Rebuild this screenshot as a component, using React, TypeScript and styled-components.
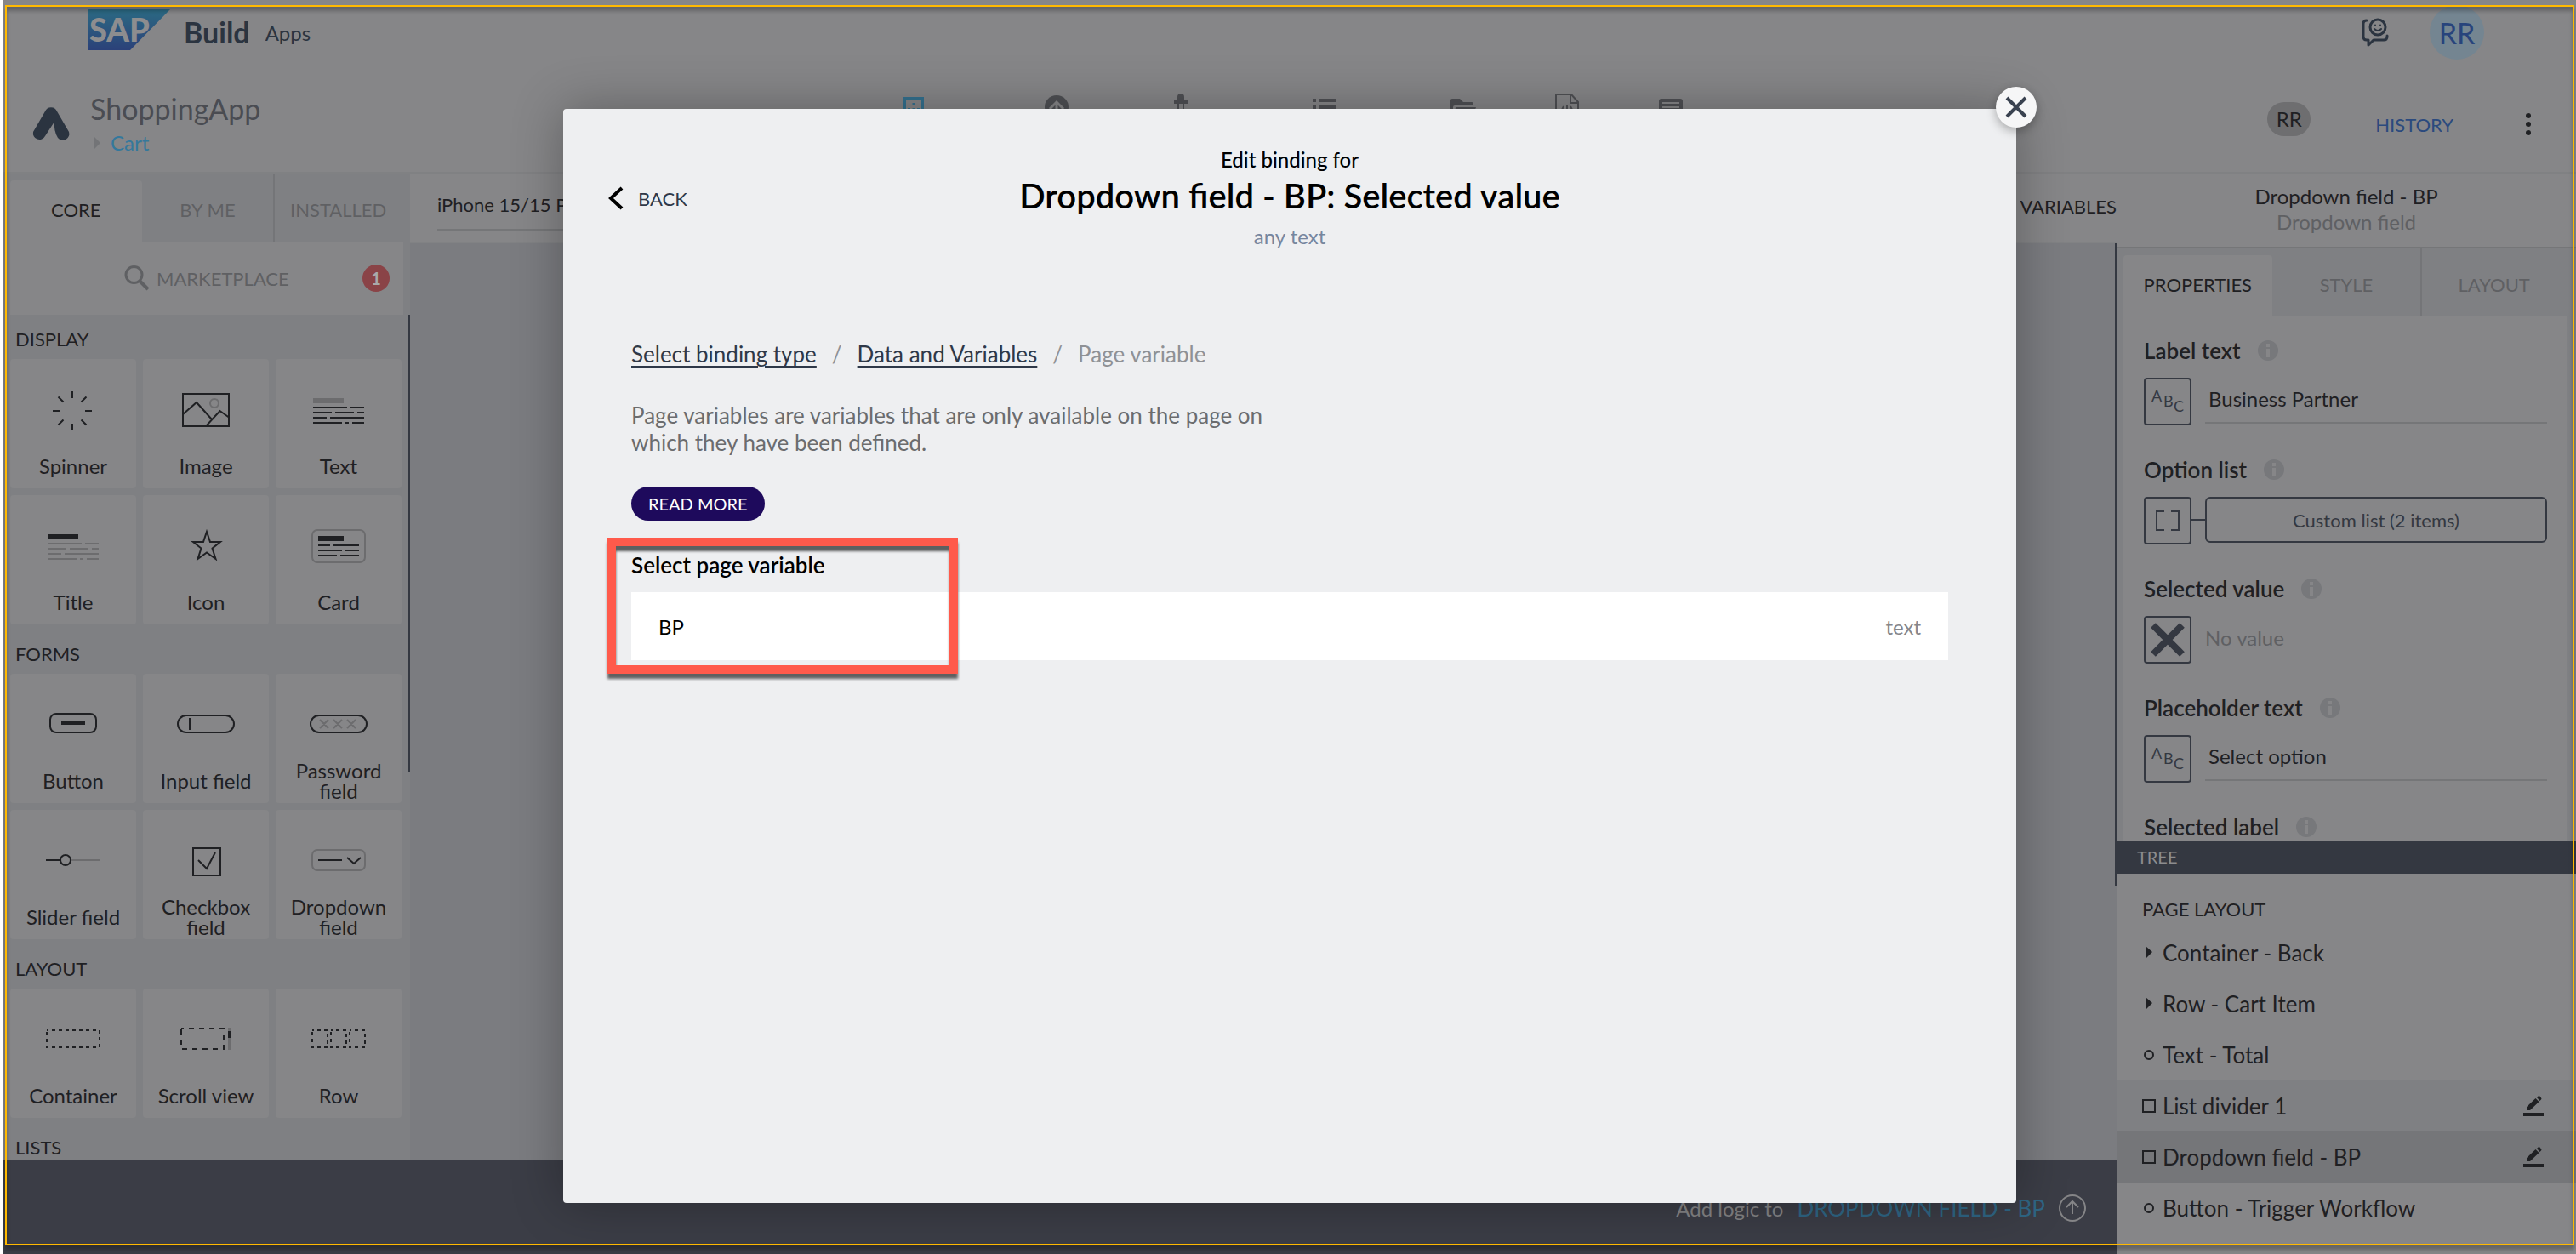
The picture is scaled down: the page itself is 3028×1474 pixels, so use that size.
import React from "react";
import styled, { createGlobalStyle } from "styled-components";

const c = {
  surface: "#868688",
  panel: "#7f8083",
  canvas: "#7b7c80",
  ink: "#1f2023",
  slate: "#343841",
  muted: "#5f6063",
  faint: "#6c6c6e",
  line: "#757678",
  bar: "#3b3d46",
  blue: "#34789c",
};

const Global = createGlobalStyle`
  *, *::before, *::after { box-sizing: border-box; }
  body { margin: 0; background: #fff; font-family: Lato, "Open Sans", sans-serif; font-size: 24px; color: ${c.ink}; }
  button, input, select { font: inherit; color: inherit; background: none; border: 0; padding: 0; margin: 0; border-radius: 0; text-align: inherit; }
  h1, h2, h3, p, ul { margin: 0; padding: 0; font-size: inherit; font-weight: 400; list-style: none; }
  svg { display: block; overflow: visible; flex: none; }
`;

const Page = styled.div`
  position: relative;
  margin-left: 4px;
  height: 100vh;
  display: flex;
  flex-direction: column;
  background: ${c.surface};
  overflow: hidden;
`;

const ShellBar = styled.header`
  display: flex;
  align-items: center;
  height: 76px;
  padding: 0 108px 0 100px;
`;
const Product = styled.strong`
  margin-left: 16px;
  font-size: 34px;
  font-weight: 700;
  line-height: 40px;
  color: #2b3440;
`;
const ProductArea = styled.span`
  margin-left: 18px;
  flex: 1;
  color: #2b3440;
`;
const Avatar = styled.button`
  width: 64px;
  height: 64px;
  margin-left: 48px;
  border-radius: 50%;
  background: #748591;
  color: #28447c;
  font-size: 34px;
  text-align: center;
`;

const AppBar = styled.header`
  display: grid;
  grid-template-columns: 1fr auto 1fr;
  height: 128px;
  padding-left: 6px;
  border-bottom: 2px solid #808183;
`;
const AppIdentity = styled.div`
  display: flex;
  align-items: flex-start;
  gap: 24px;
  padding: 32px 0 0 28px;
  > svg { margin-top: 16px; }
`;
const AppName = styled.h1`
  font-size: 34px;
  line-height: 40px;
  color: #4a4c52;
`;
const Crumb = styled.a`
  display: flex;
  align-items: center;
  gap: 12px;
  margin-top: 4px;
  padding-left: 4px;
  line-height: 32px;
  color: ${c.blue};
  text-decoration: none;
`;
const ToolNav = styled.nav`
  display: flex;
  align-items: flex-start;
  padding-top: 32px;
  color: #4f5054;
`;
const Tool = styled.button<{ $gap?: number; $active?: boolean }>`
  margin-left: ${(p) => p.$gap ?? 0}px;
  color: ${(p) => (p.$active ? "#34718f" : "inherit")};
`;
const AppActions = styled.div`
  display: flex;
  justify-content: flex-end;
  align-items: flex-start;
  gap: 76px;
  padding: 44px 44px 0 0;
`;
const UserPill = styled.span`
  width: 51px;
  height: 40px;
  line-height: 40px;
  border-radius: 20px;
  text-align: center;
  background: #6e6e70;
`;
const HistoryButton = styled.button`
  height: 52px;
  font-size: 22px;
  color: #2b4a7e;
`;
const MoreButton = styled.button`
  height: 52px;
`;

const Workspace = styled.div`
  flex: 1;
  min-height: 0;
  display: flex;
`;
const Stage = styled.div`
  flex: 1;
  min-width: 0;
  display: flex;
  flex-direction: column;
`;
const StageUpper = styled.div`
  flex: 1;
  min-height: 0;
  display: flex;
`;

const Palette = styled.aside`
  width: 478px;
  display: flex;
  flex-direction: column;
  background: ${c.panel};
`;
const Tabs = styled.div<{ $right: number }>`
  display: grid;
  grid-template-columns: repeat(3, 1fr);
  height: 80px;
  flex: none;
  padding: 0 ${(p) => p.$right}px 0 8px;
  background: ${c.panel};
`;
const Tab = styled.button<{ $active?: boolean; $divided?: boolean }>`
  margin-top: ${(p) => (p.$active ? 8 : 0)}px;
  padding: ${(p) => (p.$active ? "0 0 4px" : p.$divided ? "4px 4px 0 0" : "4px 0 0")};
  border-radius: ${(p) => (p.$active ? "4px 4px 0 0" : "0")};
  border-left: ${(p) => (p.$divided ? "2px solid #747578" : "0")};
  background: ${(p) => (p.$active ? c.surface : "transparent")};
  color: ${(p) => (p.$active ? c.ink : c.muted)};
  font-size: 22px;
  text-align: center;
`;
const Market = styled.div`
  display: flex;
  align-items: center;
  height: 86px;
  flex: none;
  margin: 0 8px;
  padding: 0 16px 0 134px;
  background: ${c.surface};
`;
const MarketButton = styled.button`
  flex: 1;
  display: flex;
  align-items: center;
  gap: 8px;
  font-size: 22px;
  color: ${c.muted};
`;
const Badge = styled.span`
  width: 32px;
  height: 32px;
  border-radius: 50%;
  background: #8a4347;
  color: #a9a9ab;
  font-size: 20px;
  font-weight: 700;
  line-height: 32px;
  text-align: center;
`;
const PaletteBody = styled.div`
  flex: 1;
  min-height: 0;
  display: flex;
  justify-content: space-between;
  overflow: hidden;
`;
const PaletteList = styled.div`
  flex: 1;
  padding: 14px 8px 0;
`;
const PaletteTitle = styled.h2`
  padding: 0 6px;
  margin-bottom: 8px;
  font-size: 22px;
  line-height: 30px;
`;
const TileGrid = styled.div`
  display: grid;
  grid-template-columns: repeat(3, 1fr);
  gap: 8px;
  margin-bottom: 20px;
`;
const Tile = styled.button`
  display: flex;
  flex-direction: column;
  align-items: center;
  height: 152px;
  padding-top: 30px;
  border-radius: 4px;
  background: ${c.surface};
  color: ${c.ink};
`;
const TileLabel = styled.span`
  display: flex;
  align-items: center;
  height: 48px;
  margin-top: 12px;
  padding: 0 4px;
  line-height: 24px;
  text-align: center;
`;
const Thumb = styled.span<{ $height: string }>`
  width: 2px;
  height: ${(p) => p.$height};
  background: ${c.slate};
`;

const Center = styled.main`
  flex: 1;
  display: flex;
  flex-direction: column;
  background: ${c.canvas};
`;
const CanvasBar = styled.div`
  display: flex;
  align-items: center;
  justify-content: space-between;
  height: 82px;
  padding-left: 32px;
  background: ${c.surface};
  border-bottom: 2px solid #818284;
`;
const DeviceSelect = styled.select`
  appearance: none;
  width: 300px;
  height: 54px;
  padding-bottom: 6px;
  font-size: 22px;
  border-bottom: 2px solid ${c.line};
`;
const VariablesButton = styled.button`
  padding-bottom: 4px;
  font-size: 22px;
`;
const Canvas = styled.div`
  flex: 1;
  display: flex;
  justify-content: flex-end;
`;

const LogicBar = styled.footer`
  display: flex;
  justify-content: flex-end;
  height: 110px;
  padding: 40px 36px 0 0;
  background: ${c.bar};
  color: #858587;
`;
const LogicButton = styled.button`
  display: flex;
  align-items: center;
  gap: 16px;
  height: 32px;
`;
const LogicTarget = styled.span`
  font-size: 26px;
  color: #2f6685;
`;

const Inspector = styled.aside`
  width: 540px;
  display: flex;
  flex-direction: column;
`;
const InspectorHead = styled.div`
  height: 88px;
  flex: none;
  padding-top: 12px;
  text-align: center;
  line-height: 30px;
  border-bottom: 2px solid ${c.line};
`;
const Muted = styled.p`
  color: ${c.muted};
`;
const InspectorBody = styled.div`
  flex: 1;
  min-height: 0;
  overflow: hidden;
  padding: 0 10px 0 8px;
  background: ${c.panel};
`;
const PropertyList = styled.div`
  display: flex;
  flex-direction: column;
  gap: 40px;
  padding: 28px 24px 0;
  background: ${c.surface};
`;
const PropertyLabel = styled.div`
  display: flex;
  align-items: center;
  gap: 20px;
  height: 24px;
  margin-bottom: 20px;
  font-size: 26px;
  font-weight: 600;
`;
const PropertyRow = styled.div`
  display: flex;
  align-items: flex-start;
`;
const KindButton = styled.button`
  width: 56px;
  height: 56px;
  flex: none;
  display: grid;
  place-items: center;
  border: 2px solid ${c.slate};
  border-radius: 4px;
  color: ${c.slate};
`;
const PropertyInput = styled.input`
  flex: 1;
  min-width: 0;
  height: 54px;
  margin-left: 16px;
  padding: 0 4px 4px;
  border-bottom: 2px solid ${c.line};
  outline: 0;
`;
const Link = styled.span`
  width: 16px;
  height: 2px;
  margin-top: 26px;
  background: ${c.slate};
`;
const ListButton = styled.button`
  flex: 1;
  height: 54px;
  border: 2px solid ${c.slate};
  border-radius: 6px;
  color: ${c.slate};
  font-size: 22px;
  text-align: center;
`;
const Empty = styled.span`
  margin-left: 16px;
  line-height: 52px;
  color: ${c.muted};
`;

const Tree = styled.section`
  height: 485px;
  flex: none;
  background: ${c.surface};
`;
const TreeBar = styled.h2`
  height: 38px;
  padding-left: 24px;
  background: ${c.slate};
  color: #8c8c8e;
  font-size: 20px;
  line-height: 36px;
`;
const TreeTitle = styled.h3`
  padding: 27px 30px 6px;
  font-size: 22px;
  line-height: 30px;
`;
const TreeItem = styled.li<{ $bg?: string }>`
  display: flex;
  align-items: center;
  justify-content: space-between;
  height: 60px;
  padding: 0 38px 0 30px;
  background: ${(p) => p.$bg ?? "transparent"};
`;
const TreeName = styled.button`
  display: flex;
  align-items: center;
  gap: 8px;
  height: 60px;
  font-size: 26px;
`;

const Overlay = styled.div`
  position: absolute;
  inset: 0;
  display: flex;
  padding: 128px 658px 60px;
`;
const Dialog = styled.div`
  position: relative;
  flex: 1;
  padding: 44px 80px 0;
  border-radius: 4px;
  background: #eeeff1;
  color: #000;
  box-shadow: 0 0 60px rgba(0, 0, 0, 0.3);
`;
const CloseButton = styled.button`
  position: absolute;
  top: -26px;
  right: -24px;
  width: 48px;
  height: 48px;
  display: grid;
  place-items: center;
  border-radius: 50%;
  background: #f6f6f7;
  box-shadow: 0 4px 12px rgba(0, 0, 0, 0.3);
`;
const DialogHead = styled.header`
  display: grid;
  grid-template-columns: 1fr auto 1fr;
  align-items: center;
  margin: 0 -28px 106px;
  text-align: center;
`;
const BackButton = styled.button`
  display: flex;
  align-items: center;
  gap: 16px;
  font-size: 22px;
  color: #2e3848;
`;
const Kicker = styled.p`
  line-height: 32px;
  font-weight: 500;
`;
const DialogTitle = styled.h2`
  font-size: 40px;
  font-weight: 600;
  line-height: 52px;
`;
const TypeHint = styled.p`
  margin-top: 6px;
  line-height: 32px;
  color: #76869f;
`;
const Trail = styled.nav`
  display: flex;
  gap: 18px;
  font-size: 26px;
  line-height: 32px;
  color: #8f9195;
  a { color: #2e3848; text-decoration-thickness: 2px; text-underline-offset: 4px; }
`;
const Help = styled.p`
  max-width: 780px;
  margin: 40px 0 36px;
  font-size: 26px;
  line-height: 32px;
  color: #6b6c6e;
`;
const ReadMore = styled.button`
  display: block;
  height: 40px;
  padding: 0 20px;
  border-radius: 20px;
  background: #1e0a5c;
  color: #fff;
  font-size: 20px;
`;
const VariableSection = styled.section`
  position: relative;
  margin-top: 36px;
`;
const SectionTitle = styled.h3`
  margin-bottom: 16px;
  font-size: 26px;
  font-weight: 600;
  line-height: 32px;
`;
const VariableRow = styled.button`
  display: flex;
  align-items: center;
  justify-content: space-between;
  width: 100%;
  height: 80px;
  padding: 0 32px;
  background: #fff;
`;
const VariableType = styled.span`
  color: #85868a;
`;
const Highlight = styled.div`
  position: absolute;
  top: -16px;
  left: -28px;
  width: 412px;
  height: 160px;
  border: 10px solid #ff5a4b;
  box-shadow: 0 6px 3px rgba(0, 0, 0, 0.6), inset 0 6px 3px rgba(0, 0, 0, 0.6);
  pointer-events: none;
`;
const ShotFrame = styled.div`
  position: absolute;
  inset: 6px 2px 10px 2px;
  border: 2px solid #ffb900;
  box-shadow: 0 5px 4px rgba(0, 0, 0, 0.25), inset 0 5px 4px rgba(0, 0, 0, 0.25);
  pointer-events: none;
`;

const g = c.faint;
const k = c.ink;

/* Horizontal strokes written as [x1, x2, y] */
const Strokes = ({ rows, color }: { rows: number[][]; color: string }) => (
  <g fill={color}>
    {rows.map(([a, b, y]) => (
      <rect key={`${a}-${y}`} x={a} y={y} width={b - a} height="2" />
    ))}
  </g>
);
const paragraph = [
  [2, 42, 26], [46, 62, 26],
  [2, 24, 32], [28, 50, 32], [54, 62, 32],
  [2, 18, 38], [22, 62, 38],
  [2, 36, 44], [40, 44, 44], [48, 62, 44],
];

const glyphs: Record<string, React.ReactNode> = {
  Spinner: (
    <path stroke={k} strokeWidth="2" d="M31 8v8M31 46v8M8 31h8M46 31h8M14.500 14.500l6 6M47.500 14.500l-6 6M14.500 47.500l6-6M47.500 47.500l-6-6" />
  ),
  Image: (
    <g fill="none" stroke={k} strokeWidth="2">
      <rect x="5" y="11" width="54" height="38" />
      <path d="M5 35L21 21L39 41M32 49L48.500 31L59 38.500" />
      <circle cx="42" cy="22" r="5" stroke={g} />
    </g>
  ),
  Text: (
    <>
      <rect x="2" y="16" width="36" height="6" fill={g} />
      <Strokes rows={paragraph} color={k} />
    </>
  ),
  Title: (
    <>
      <rect x="2" y="16" width="36" height="6" fill={k} />
      <Strokes rows={paragraph} color={g} />
    </>
  ),
  Icon: (
    <path fill="none" stroke={k} strokeWidth="2" d="M33 13l4 12h12l-9.500 7.500 4 12.500L33 37.500 22.500 45l4-12.500L17 25h12z" />
  ),
  Card: (
    <>
      <rect x="1" y="11" width="62" height="38" rx="6" fill="none" stroke={g} strokeWidth="2" />
      <rect x="8" y="18" width="30" height="6" fill={k} />
      <Strokes color={k} rows={[[8, 22, 28], [26, 56, 28], [8, 36, 34], [40, 56, 34], [8, 30, 40], [34, 56, 40]]} />
    </>
  ),
  Button: (
    <>
      <rect x="5" y="17" width="54" height="22" rx="7" fill="none" stroke={k} strokeWidth="2" />
      <rect x="18" y="26" width="28" height="4" fill={k} />
    </>
  ),
  "Input field": (
    <g fill="none" stroke={k} strokeWidth="2">
      <rect x="-1" y="19" width="66" height="20" rx="10" />
      <path d="M13 22v14" />
    </g>
  ),
  "Password field": (
    <g fill="none" stroke={k} strokeWidth="2">
      <rect x="-1" y="19" width="66" height="20" rx="10" />
      <path stroke={g} d="M10 24l10 10M20 24l-10 10M26 24l10 10M36 24l-10 10M42 24l10 10M52 24l-10 10" />
    </g>
  ),
  "Slider field": (
    <g fill="none" stroke={k} strokeWidth="2">
      <path d="M0 29h17" />
      <circle cx="23" cy="29" r="6" />
      <path stroke={g} d="M30 29h34" />
    </g>
  ),
  "Checkbox field": (
    <g fill="none" stroke={k} strokeWidth="2">
      <rect x="17" y="15" width="32" height="32" />
      <path d="M23 29l10 10L43 20" />
    </g>
  ),
  "Dropdown field": (
    <g fill="none" stroke={k} strokeWidth="2">
      <rect x="1" y="17" width="62" height="24" rx="6" stroke={g} />
      <path d="M8 29h28M42 26l8 7 8-7" />
    </g>
  ),
  Container: (
    <rect x="1" y="19" width="62" height="20" fill="none" stroke={k} strokeWidth="2" strokeDasharray="4 4" strokeDashoffset="2" />
  ),
  "Scroll view": (
    <>
      <rect x="3" y="17" width="50" height="24" fill="none" stroke={k} strokeWidth="2" strokeDasharray="6 6" strokeDashoffset="3" />
      <rect x="58" y="16" width="4" height="26" fill={g} />
      <rect x="58" y="20" width="4" height="8" fill={k} />
    </>
  ),
  Row: (
    <g fill="none" stroke={k} strokeWidth="2" strokeDasharray="4 4" strokeDashoffset="2">
      <rect x="1" y="19" width="18" height="20" />
      <rect x="23" y="19" width="18" height="20" />
      <rect x="45" y="19" width="18" height="20" />
    </g>
  ),
};

const palette = [
  { title: "DISPLAY", tiles: ["Spinner", "Image", "Text", "Title", "Icon", "Card"] },
  { title: "FORMS", tiles: ["Button", "Input field", "Password field", "Slider field", "Checkbox field", "Dropdown field"] },
  { title: "LAYOUT", tiles: ["Container", "Scroll view", "Row"] },
  { title: "LISTS", tiles: [] },
];

const tools: { name: string; gap?: number; art: React.ReactNode }[] = [
  {
    name: "UI canvas",
    art: (
      <>
        <path fill="none" stroke="currentColor" strokeWidth="3" d="M5.500 32V7.500h21V32" />
        <path fill="currentColor" d="M14.500 13h3v3h-3zM9 19h3v3H9zM14.500 19h3v3h-3zM20 19h3v3h-3z" />
      </>
    ),
  },
  {
    name: "Launch",
    gap: 136,
    art: (
      <>
        <circle cx="16" cy="18" r="14" fill="currentColor" />
        <path fill="none" stroke={c.surface} strokeWidth="3" d="M16 28V13M8 20l8-8 8 8" />
      </>
    ),
  },
  {
    name: "Integrations",
    gap: 114,
    art: <path fill="currentColor" d="M12 10V6a4 4 0 018 0v4h4v4h-4v18h-2V14h-4v18h-2V14H8v-4z" />,
  },
  {
    name: "Data",
    gap: 137,
    art: <path fill="currentColor" d="M2 8h4v4H2zM10 8h20v4H10zM2 16h4v4H2zM10 16h20v4H10zM2 24h4v4H2zM10 24h20v4H10z" />,
  },
  {
    name: "Files",
    gap: 131,
    art: <path fill="currentColor" d="M1 10q0-2 2-2h9l4 4h10q2 0 2 2v2H6q-2 0-2 2v12H1zM7 18h24l-4 12H5z" />,
  },
  {
    name: "Code",
    gap: 90,
    art: <path fill="none" stroke="currentColor" strokeWidth="2" d="M3 32V3h18l8 9v20M20 3v10h9M12 17l-4 8 4 6M20 17l4 8-4 6M16 15v16" />,
  },
  {
    name: "Theme",
    gap: 90,
    art: (
      <>
        <rect x="2" y="8" width="28" height="24" rx="3" fill="currentColor" />
        <path stroke={c.surface} strokeWidth="2" d="M6 13h20M6 18h20" />
      </>
    ),
  },
];

const SapLogo = () => (
  <svg width="96" height="54" viewBox="0 0 96 54" role="img" aria-label="SAP">
    <defs>
      <linearGradient id="sapFill" x1="0" y1="0" x2="0" y2="1">
        <stop offset="0" stopColor="#2b6a83" />
        <stop offset="1" stopColor="#2b4179" />
      </linearGradient>
    </defs>
    <path d="M0 0h96L49 48H0z" fill="url(#sapFill)" />
    <text x="1" y="38" fontSize="38" fontWeight="900" fill="#8d8d8f">SAP</text>
  </svg>
);

const Info = () => (
  <svg width="24" height="24" viewBox="0 0 24 24" aria-hidden="true">
    <circle cx="12" cy="12" r="12" fill="#77787b" />
    <path fill={c.surface} d="M10 4h4v4h-4zM10 10h4v10h-4z" />
  </svg>
);

const AbcIcon = () => (
  <svg width="40" height="36" viewBox="0 0 40 36" fontSize="18" fill="currentColor" aria-hidden="true">
    <text x="1" y="18">A</text>
    <text x="15" y="24">B</text>
    <text x="27" y="30">C</text>
  </svg>
);

const kinds = {
  abc: <AbcIcon />,
  list: (
    <svg width="32" height="28" viewBox="0 0 32 28" fill="none" stroke="currentColor" strokeWidth="2">
      <path d="M12 3H3v22h9M20 3h9v22h-9" />
    </svg>
  ),
  none: (
    <svg width="40" height="40" viewBox="0 0 40 40" stroke="currentColor" strokeWidth="8">
      <path d="M3 3l34 34M37 3L3 37" />
    </svg>
  ),
};

const Property = ({ label, id, kind, children }: { label: string; id: string; kind?: keyof typeof kinds; children?: React.ReactNode }) => (
  <div>
    <PropertyLabel>
      <label htmlFor={id}>{label}</label>
      <Info />
    </PropertyLabel>
    {kind && (
      <PropertyRow>
        <KindButton aria-label={`${label} binding`}>{kinds[kind]}</KindButton>
        {children}
      </PropertyRow>
    )}
  </div>
);

const nodeMarks = {
  branch: <path fill="currentColor" d="M4 0l8 7-8 8z" />,
  leaf: <circle cx="8" cy="8" r="5" fill="none" stroke="currentColor" strokeWidth="2" />,
  box: <rect x="1" y="1" width="14" height="14" fill="none" stroke="currentColor" strokeWidth="2" />,
};

const tree: { name: string; mark: keyof typeof nodeMarks; bg?: string; editable?: boolean }[] = [
  { name: "Container - Back", mark: "branch" },
  { name: "Row - Cart Item", mark: "branch" },
  { name: "Text - Total", mark: "leaf" },
  { name: "List divider 1", mark: "box", bg: c.panel, editable: true },
  { name: "Dropdown field - BP", mark: "box", bg: "#757679", editable: true },
  { name: "Button - Trigger Workflow", mark: "leaf" },
];

export default function App() {
  return (
    <>
      <Global />
      <Page>
        <ShellBar>
          <SapLogo />
          <Product>Build</Product>
          <ProductArea>Apps</ProductArea>
          <button aria-label="Feedback">
            <svg width="32" height="34" viewBox="0 0 32 34" fill="none" stroke="#2b3440" strokeWidth="3" strokeLinecap="round" strokeLinejoin="round">
              <path d="M6 3Q2 3 2 7v15q0 4 4 4h2v6l6-6h12q4 0 4-4v-1" />
              <circle cx="19" cy="11" r="9" />
              <path d="M15 13q4 4 8 0M16 8.500v.1M22 8.500v.1" strokeWidth="2" />
            </svg>
          </button>
          <Avatar aria-label="Account">RR</Avatar>
        </ShellBar>

        <AppBar>
          <AppIdentity>
            <svg width="44" height="44" viewBox="0 0 44 44" fill="#2b3440" aria-hidden="true">
              <path d="M15 7a7.500 7.500 0 0114 0l14 24a7.500 7.500 0 01-13 7q-5-8-4-19L15 36A7.500 7.500 0 011 31z" />
            </svg>
            <div>
              <AppName>ShoppingApp</AppName>
              <Crumb href="#cart">
                <svg width="8" height="16" viewBox="0 0 8 16" fill="#737477"><path d="M0 0l8 8-8 8z" /></svg>
                Cart
              </Crumb>
            </div>
          </AppIdentity>
          <ToolNav>
            {tools.map((t, i) => (
              <Tool key={t.name} aria-label={t.name} $gap={t.gap} $active={i === 0}>
                <svg width="32" height="32" viewBox="0 0 32 32">{t.art}</svg>
              </Tool>
            ))}
          </ToolNav>
          <AppActions>
            <UserPill>RR</UserPill>
            <HistoryButton>HISTORY</HistoryButton>
            <MoreButton aria-label="More">
              <svg width="24" height="32" viewBox="0 0 24 32" fill={c.ink}>
                <circle cx="12" cy="6" r="3" /><circle cx="12" cy="16" r="3" /><circle cx="12" cy="26" r="3" />
              </svg>
            </MoreButton>
          </AppActions>
        </AppBar>

        <Workspace>
          <Stage>
            <StageUpper>
              <Palette>
                <Tabs $right={6}>
                  <Tab $active>CORE</Tab>
                  <Tab>BY ME</Tab>
                  <Tab $divided>INSTALLED</Tab>
                </Tabs>
                <Market>
                  <MarketButton>
                    <svg width="30" height="30" viewBox="0 0 30 30" fill="none" stroke="currentColor">
                      <circle cx="11.500" cy="11" r="9.500" strokeWidth="3" />
                      <path d="M18 18l10 10" strokeWidth="4" />
                    </svg>
                    MARKETPLACE
                  </MarketButton>
                  <Badge>1</Badge>
                </Market>
                <PaletteBody>
                  <PaletteList>
                    {palette.map((s) => (
                      <section key={s.title}>
                        <PaletteTitle>{s.title}</PaletteTitle>
                        <TileGrid>
                          {s.tiles.map((t) => (
                            <Tile key={t}>
                              <svg width="64" height="60" viewBox="0 0 64 60" aria-hidden="true">{glyphs[t]}</svg>
                              <TileLabel>{t}</TileLabel>
                            </Tile>
                          ))}
                        </TileGrid>
                      </section>
                    ))}
                  </PaletteList>
                  <Thumb $height="54%" />
                </PaletteBody>
              </Palette>
              <Center>
                <CanvasBar>
                  <DeviceSelect aria-label="Preview device">
                    <option>iPhone 15/15 Pro</option>
                  </DeviceSelect>
                  <VariablesButton>VARIABLES</VariablesButton>
                </CanvasBar>
                <Canvas>
                  <Thumb $height="70%" />
                </Canvas>
              </Center>
            </StageUpper>
            <LogicBar>
              <LogicButton>
                Add logic to
                <LogicTarget>DROPDOWN FIELD - BP</LogicTarget>
                <svg width="32" height="32" viewBox="0 0 32 32" fill="none" stroke="currentColor" strokeWidth="2">
                  <circle cx="16" cy="16" r="15" />
                  <path d="M16 23V9M9 15l7-7 7 7" />
                </svg>
              </LogicButton>
            </LogicBar>
          </Stage>

          <Inspector>
            <InspectorHead>
              <p>Dropdown field - BP</p>
              <Muted>Dropdown field</Muted>
            </InspectorHead>
            <Tabs $right={8}>
              <Tab $active>PROPERTIES</Tab>
              <Tab>STYLE</Tab>
              <Tab $divided>LAYOUT</Tab>
            </Tabs>
            <InspectorBody>
              <PropertyList>
                <Property label="Label text" id="label-text" kind="abc">
                  <PropertyInput id="label-text" defaultValue="Business Partner" />
                </Property>
                <Property label="Option list" id="option-list" kind="list">
                  <Link />
                  <ListButton id="option-list">Custom list (2 items)</ListButton>
                </Property>
                <Property label="Selected value" id="selected-value" kind="none">
                  <Empty id="selected-value">No value</Empty>
                </Property>
                <Property label="Placeholder text" id="placeholder-text" kind="abc">
                  <PropertyInput id="placeholder-text" defaultValue="Select option" />
                </Property>
                <Property label="Selected label" id="selected-label" />
              </PropertyList>
            </InspectorBody>
            <Tree>
              <TreeBar>TREE</TreeBar>
              <TreeTitle>PAGE LAYOUT</TreeTitle>
              <ul>
                {tree.map((n) => (
                  <TreeItem key={n.name} $bg={n.bg}>
                    <TreeName>
                      <svg width="16" height="16" viewBox="0 0 16 16">{nodeMarks[n.mark]}</svg>
                      {n.name}
                    </TreeName>
                    {n.editable && (
                      <button aria-label={`Edit ${n.name}`}>
                        <svg width="24" height="24" viewBox="0 0 24 24" fill="currentColor">
                          <path d="M0 20h24v4H0zM4 13L14.500 3l4 4L8 17H4zM16 2l1.500-1.500q1-1 2 0l1.500 2q1 1 0 2L19.500 6z" />
                        </svg>
                      </button>
                    )}
                  </TreeItem>
                ))}
              </ul>
            </Tree>
          </Inspector>
        </Workspace>

        <Overlay>
          <Dialog role="dialog" aria-modal="true" aria-labelledby="dialog-title">
            <CloseButton aria-label="Close">
              <svg width="24" height="24" viewBox="0 0 24 24" stroke="#3a4250" strokeWidth="4">
                <path d="M1 1l22 22M23 1L1 23" />
              </svg>
            </CloseButton>
            <DialogHead>
              <BackButton>
                <svg width="20" height="28" viewBox="0 0 20 28" fill="none" stroke="#000" strokeWidth="4">
                  <path d="M17 2L4 14l13 12" />
                </svg>
                BACK
              </BackButton>
              <div>
                <Kicker>Edit binding for</Kicker>
                <DialogTitle id="dialog-title">Dropdown field - BP: Selected value</DialogTitle>
                <TypeHint>any text</TypeHint>
              </div>
            </DialogHead>
            <Trail>
              <a href="#binding-type">Select binding type</a>
              <span>/</span>
              <a href="#data">Data and Variables</a>
              <span>/</span>
              <span>Page variable</span>
            </Trail>
            <Help>Page variables are variables that are only available on the page on which they have been defined.</Help>
            <ReadMore>READ MORE</ReadMore>
            <VariableSection>
              <SectionTitle>Select page variable</SectionTitle>
              <VariableRow>
                <span>BP</span>
                <VariableType>text</VariableType>
              </VariableRow>
              <Highlight />
            </VariableSection>
          </Dialog>
        </Overlay>
        <ShotFrame />
      </Page>
    </>
  );
}
